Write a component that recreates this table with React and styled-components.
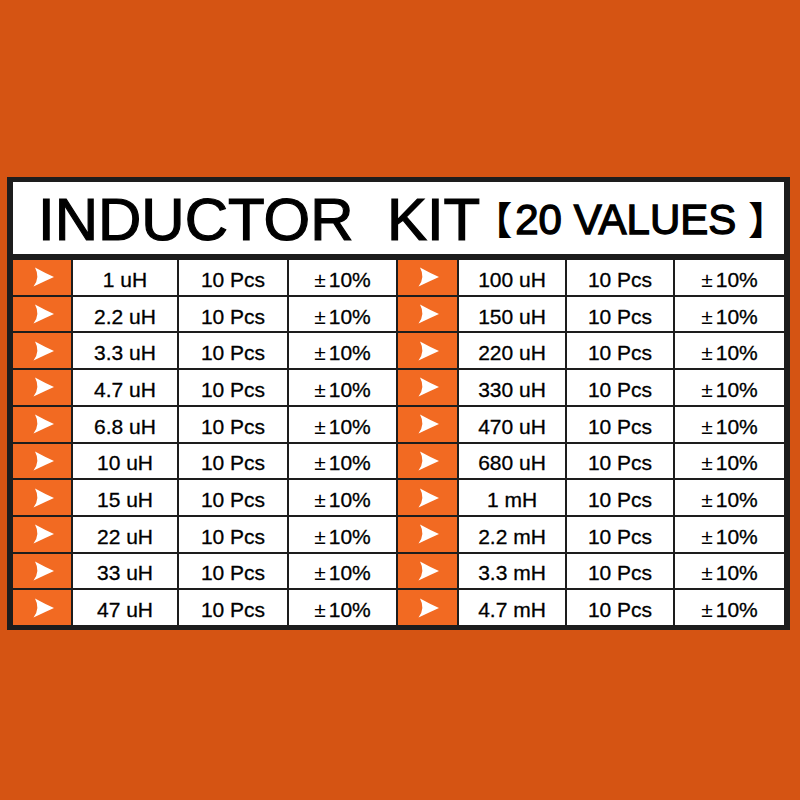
import React from "react";
import styled, { createGlobalStyle } from "styled-components";

const Global = createGlobalStyle`
  html, body {
    margin: 0;
    padding: 0;
    background: #d55413;
  }
  body {
    width: 800px;
    height: 800px;
    overflow: hidden;
  }
`;

const Page = styled.div`
  width: 800px;
  height: 800px;
  padding: 177px 0 0 7px;
  box-sizing: border-box;
  background: #d55413;
`;

const Frame = styled.div`
  width: 783px;
  height: 453px;
  box-sizing: border-box;
  border-style: solid;
  border-color: #1d1d1d;
  border-width: 5px 6px 5px 6px;
  background: #1d1d1d;
  display: flex;
  flex-direction: column;
`;

const Header = styled.div`
  height: 72px;
  margin-bottom: 6px;
  padding-left: 25px;
  box-sizing: border-box;
  background: #ffffff;
  display: flex;
  align-items: center;
  justify-content: flex-start;
  font-family: "Liberation Sans", Arial, sans-serif;
  color: #000;
  white-space: pre;
`;

const Title = styled.span`
  font-size: 60px;
  line-height: 1;
  margin-top: 3px;
  -webkit-text-stroke: 1.2px #000;
`;

const Bracket = styled.span`
  font-family: "Noto Sans CJK SC", "Liberation Sans", sans-serif;
  font-feature-settings: "halt";
  font-weight: 900;
  font-size: 38px;
  line-height: 1;
  margin-left: ${(p) => p.$ml || 0}px;
  margin-right: ${(p) => p.$mr || 0}px;
`;

const Sub = styled.span`
  font-size: 42px;
  line-height: 1;
  margin-top: 3px;
  -webkit-text-stroke: 1.3px #000;
`;

const Grid = styled.div`
  height: 365px;
  display: grid;
  grid-template-columns: 58px 104px 108px 107px 59px 106px 106px 109px;
  grid-template-rows: repeat(10, 1fr);
  column-gap: 2px;
  row-gap: 2px;
`;

const ArrowCell = styled.div`
  background: #f26a22;
  display: flex;
  align-items: center;
  justify-content: center;
  padding-left: 2px;
`;

const Cell = styled.div`
  background: #ffffff;
  display: flex;
  align-items: center;
  justify-content: center;
  font-family: "Liberation Sans", Arial, sans-serif;
  font-size: 21px;
  color: #000;
  padding-top: 5px;
  box-sizing: border-box;
  -webkit-text-stroke: 0.3px #000;
`;

const Pm = styled.span`
  margin-right: 3px;
  -webkit-text-stroke: 0;
`;

const Arrow = () => (
  <svg width="21" height="20" viewBox="0 0 21 20">
    <path
      d="M2 0.5 Q12 6 21 10 Q12 14 0.5 19.5 Q7.5 10.5 2 0.5 Z"
      fill="#ffffff"
    />
  </svg>
);

const left = ["1 uH", "2.2 uH", "3.3 uH", "4.7 uH", "6.8 uH", "10 uH", "15 uH", "22 uH", "33 uH", "47 uH"];
const right = ["100 uH", "150 uH", "220 uH", "330 uH", "470 uH", "680 uH", "1 mH", "2.2 mH", "3.3 mH", "4.7 mH"];

const Half = ({ value }) => (
  <>
    <ArrowCell>
      <Arrow />
    </ArrowCell>
    <Cell>{value}</Cell>
    <Cell>10 Pcs</Cell>
    <Cell>
      <Pm>±</Pm>10%
    </Cell>
  </>
);

export default function App() {
  return (
    <Page>
      <Global />
      <Frame>
        <Header>
          <Title>INDUCTOR  KIT</Title>
          <Bracket $ml={13} $mr={3}>【</Bracket>
          <Sub>20 VALUES</Sub>
          <Bracket $ml={12}>】</Bracket>
        </Header>
        <Grid>
          {left.map((v, i) => (
            <React.Fragment key={v}>
              <Half value={v} />
              <Half value={right[i]} />
            </React.Fragment>
          ))}
        </Grid>
      </Frame>
    </Page>
  );
}
